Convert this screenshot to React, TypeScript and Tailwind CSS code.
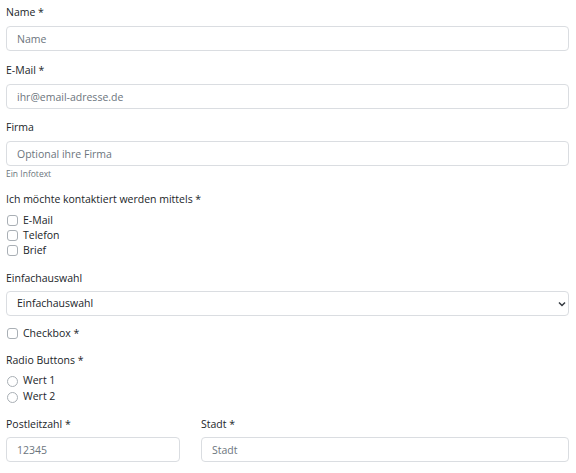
import React from "react";

const inputCls =
  "block w-full h-[25px] px-[10px] text-[10.5px] text-[#212529] placeholder:text-[#6c757d] bg-white border border-[#dadde1] rounded-[4px] outline-none";
const labelCls = "block h-[20px] leading-[20px] text-[10.5px] text-[#212529]";

function Check({ label }: { label: string }) {
  return (
    <label className="flex items-center h-[15px] text-[10.5px] text-[#212529]">
      <span className="ml-[1px] w-[11px] h-[11px] border border-[#a9afb5] rounded-[3px] bg-white mr-[5px]" />
      {label}
    </label>
  );
}

function Radio({ label }: { label: string }) {
  return (
    <label className="flex items-center h-[16px] text-[10.5px] text-[#212529]">
      <span className="ml-[1px] w-[11px] h-[11px] border border-[#a9afb5] rounded-full bg-white mr-[5px]" />
      {label}
    </label>
  );
}

export default function App() {
  return (
    <div className="min-h-screen bg-white px-[6px] pt-[2px] pr-[7px] font-['Open_Sans',sans-serif]">
      <div className="mb-[9px]">
        <label className={labelCls}>Name *</label>
        <input className={inputCls + " mt-[4px]"} placeholder="Name" />
      </div>

      <div className="mb-[8px]">
        <label className={labelCls}>E-Mail *</label>
        <input className={inputCls + " mt-[4px]"} placeholder="ihr@email-adresse.de" />
      </div>

      <div className="mb-[8px]">
        <label className={labelCls}>Firma</label>
        <input className={inputCls + " mt-[4px]"} placeholder="Optional ihre Firma" />
        <div className="mt-[1px] h-[14px] leading-[14px] text-[8.5px] text-[#6c757d]">Ein Infotext</div>
      </div>

      <div className="mb-[10px]">
        <label className={labelCls}>Ich möchte kontaktiert werden mittels *</label>
        <div className="mt-[4px]">
          <Check label="E-Mail" />
          <Check label="Telefon" />
          <Check label="Brief" />
        </div>
      </div>

      <div className="mb-[10px]">
        <label className={labelCls}>Einfachauswahl</label>
        <div className="relative mt-[3px]">
          <select className={inputCls + " appearance-none"} defaultValue="x">
            <option value="x">Einfachauswahl</option>
          </select>
          <svg
            className="absolute right-[3px] top-[10px] w-[8px] h-[6px] pointer-events-none"
            viewBox="0 0 8 6"
          >
            <path d="M1 1.5 L4 4.5 L7 1.5" fill="none" stroke="#343a40" strokeWidth="1.5" />
          </svg>
        </div>
      </div>

      <div className="mb-[9px]">
        <Check label="Checkbox *" />
      </div>

      <div className="mb-[9px]">
        <label className={labelCls}>Radio Buttons *</label>
        <div className="mt-[3px]">
          <Radio label="Wert 1" />
          <Radio label="Wert 2" />
        </div>
      </div>

      <div className="grid grid-cols-[174px_1fr] gap-x-[21px]">
        <div>
          <label className={labelCls}>Postleitzahl *</label>
          <input className={inputCls + " mt-[3px]"} placeholder="12345" />
        </div>
        <div>
          <label className={labelCls}>Stadt *</label>
          <input className={inputCls + " mt-[3px]"} placeholder="Stadt" />
        </div>
      </div>
    </div>
  );
}
